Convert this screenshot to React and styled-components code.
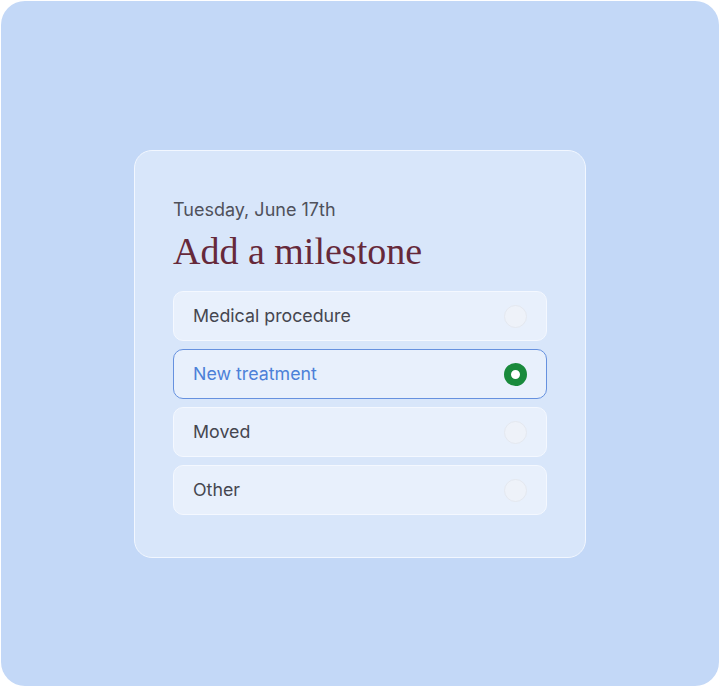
import styled, { createGlobalStyle } from 'styled-components'

const Global = createGlobalStyle`
    html, body {
        margin: 0;
        padding: 0;
        background: #ffffff;
    }
    * {
        box-sizing: border-box;
    }
`

const Frame = styled.div`
    width: 718px;
    height: 685px;
    margin: 1px;
    border-radius: 24px;
    background: #c3d8f7;
    display: flex;
    align-items: center;
    justify-content: center;
`

const Card = styled.div`
    width: 452px;
    height: 408px;
    margin-top: 21px;
    padding: 48px 38px 0 38px;
    border: 1.5px solid #f2f7ff;
    border-radius: 18px;
    background: #d8e6fa;
    font-family: Inter, "Noto Sans", sans-serif;
`

const DateLabel = styled.div`
    font-size: 18px;
    line-height: 22px;
    color: #4f515b;
`

const Title = styled.h2`
    margin: 8px 0 18px 0;
    font-family: "Liberation Serif", "DejaVu Serif", serif;
    font-weight: 400;
    font-size: 38px;
    line-height: 44px;
    color: #66293a;
`

const Options = styled.div`
    display: flex;
    flex-direction: column;
    gap: 8px;
`

const Option = styled.div`
    height: 50px;
    padding: 0 19px 2px 19px;
    display: flex;
    align-items: center;
    justify-content: space-between;
    border-radius: 10px;
    background: #e8f0fc;
    border: ${props => props.selected ? '1.5px solid #6691df' : '1.5px solid #f4f8ff'};
    color: ${props => props.selected ? '#4d80d8' : '#45464f'};
    font-size: 17.8px;
`

const Radio = styled.span`
    width: 23px;
    height: 23px;
    margin-top: 2px;
    border-radius: 50%;
    background: ${props => props.selected ? '#ffffff' : '#eef2f9'};
    border: ${props => props.selected ? '7.5px solid #198a3c' : '1px solid #e4e8ef'};
`

const items = [
    { label: 'Medical procedure' },
    { label: 'New treatment', selected: true },
    { label: 'Moved' },
    { label: 'Other' },
]

const App = () => {
  return (
    <>
        <Global/>
        <Frame>
            <Card>
                <DateLabel>Tuesday, June 17th</DateLabel>
                <Title>Add a milestone</Title>
                <Options>
                    {items.map(item => (
                        <Option key={item.label} selected={item.selected}>
                            {item.label}
                            <Radio selected={item.selected}/>
                        </Option>
                    ))}
                </Options>
            </Card>
        </Frame>
    </>
  )
}

export default App
